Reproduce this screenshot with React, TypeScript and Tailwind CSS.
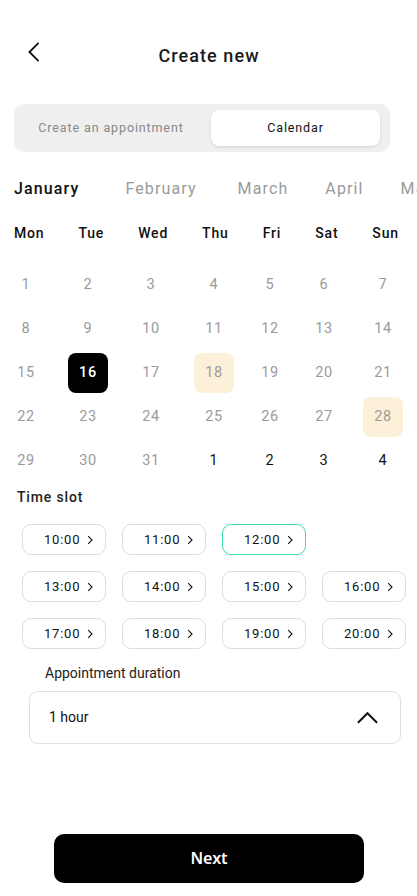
import { useState } from 'react';

const months = [
  { name: 'January', ml: 'ml-0' },
  { name: 'February', ml: 'ml-[46px]' },
  { name: 'March', ml: 'ml-[41px]' },
  { name: 'April', ml: 'ml-[37px]' },
  { name: 'May', ml: 'ml-[37px]' },
];
const weekdays = ['Mon', 'Tue', 'Wed', 'Thu', 'Fri', 'Sat', 'Sun'];

const days: { n: number; next?: boolean }[] = [
  ...Array.from({ length: 31 }, (_, i) => ({ n: i + 1 })),
  { n: 1, next: true },
  { n: 2, next: true },
  { n: 3, next: true },
  { n: 4, next: true },
];

const booked = [18, 28];

const slots = [
  ['10:00', '11:00', '12:00'],
  ['13:00', '14:00', '15:00', '16:00'],
  ['17:00', '18:00', '19:00', '20:00'],
];

function Chevron({ className }: { className?: string }) {
  return (
    <svg viewBox="0 0 10 10" className={className} fill="none" stroke="currentColor" strokeWidth="1.1">
      <path d="M3.2 1.2 7 5 3.2 8.8" />
    </svg>
  );
}

export default function App() {
  const [tab, setTab] = useState('calendar');
  const [day, setDay] = useState(16);
  const [slot, setSlot] = useState('12:00');

  return (
    <div className="w-[417px] h-[896px] bg-white relative overflow-hidden text-[#111]" style={{ fontFamily: 'Roboto, "Noto Sans", sans-serif' }}>
      {/* header */}
      <div className="relative h-[110px] pt-[41px]">
        <button className="absolute left-[24px] top-[40px] w-[20px] h-[24px] flex items-center justify-center">
          <svg viewBox="0 0 14 24" className="w-[14px] h-[22px]" fill="none" stroke="#111" strokeWidth="2">
            <path d="M12 2 2 12l10 10" />
          </svg>
        </button>
        <h1 className="text-center text-[18px] font-medium tracking-[0.06em] leading-[30px] ml-[1px] text-[#1a1a1a]">Create new</h1>
      </div>

      {/* tabs */}
      <div className="mx-[14px] w-[376px] h-[48px] bg-[#efefef] rounded-[10px] flex items-center pl-[6px] pr-[10px] -mt-[6px]">
        <button
          onClick={() => setTab('appointment')}
          className={`w-[182px] h-[36px] rounded-[8px] text-[12.5px] tracking-[0.07em] ${tab === 'appointment' ? 'bg-white text-[#111] shadow-[0_1px_3px_rgba(0,0,0,0.12)]' : 'text-[#888]'}`}
        >
          Create an appointment
        </button>
        <div className="flex-1" />
        <button
          onClick={() => setTab('calendar')}
          className={`w-[169px] h-[36px] rounded-[8px] text-[12.5px] tracking-[0.07em] ${tab === 'calendar' ? 'bg-white text-[#111] shadow-[0_1px_3px_rgba(0,0,0,0.12)]' : 'text-[#888]'}`}
        >
          Calendar
        </button>
      </div>

      {/* months */}
      <div className="flex mt-[25px] pl-[14px] whitespace-nowrap text-[16px] tracking-[0.07em] leading-[24px] overflow-hidden">
        {months.map((m, i) => (
          <span key={m.name} className={`${m.ml} ${i === 0 ? 'text-[#111] font-medium' : 'text-[#9a9a9a]'}`}>
            {m.name}
          </span>
        ))}
      </div>

      {/* weekdays */}
      <div className="flex justify-between mt-[22px] pl-[14px] pr-[18px] text-[14px] font-medium tracking-[0.06em] leading-[20px]">
        {weekdays.map((w) => (
          <span key={w}>{w}</span>
        ))}
      </div>

      {/* days */}
      <div className="grid grid-cols-[62px_63px_63px_56px_54px_59px_40px] gap-y-[4px] pl-[6px] mt-[22px]">
        {days.map((d, i) => {
          const active = !d.next && d.n === day;
          const busy = !d.next && booked.includes(d.n);
          return (
            <button
              key={i}
              onClick={() => !d.next && setDay(d.n)}
              className={`w-[40px] h-[40px] rounded-[8px] flex items-center justify-center text-[14.5px] tracking-[0.05em] ${
                active
                  ? 'bg-black text-white font-medium'
                  : busy
                  ? 'bg-[#fcf0d8] text-[#9a9a9a]'
                  : d.next
                  ? 'text-[#111]'
                  : 'text-[#9a9a9a]'
              }`}
            >
              {d.n}
            </button>
          );
        })}
      </div>

      {/* time slot */}
      <div className="pl-[17px] mt-[6px] text-[14px] font-medium tracking-[0.06em] text-[#222] leading-[20px]">Time slot</div>
      <div className="flex flex-col gap-[16px] mt-[17px] pl-[22px]">
        {slots.map((row, r) => (
          <div key={r} className="flex gap-[16px]">
            {row.map((s) => (
              <button
                key={s}
                onClick={() => setSlot(s)}
                className={`w-[84px] h-[31px] rounded-[9px] border flex items-center pl-[21px] gap-[5px] text-[13px] tracking-[0.06em] text-[#111] ${
                  slot === s ? 'border-[#3ee0a0]' : 'border-[#dcdcdc]'
                }`}
              >
                <span>{s}</span>
                <Chevron className="w-[10px] h-[10px]" />
              </button>
            ))}
          </div>
        ))}
      </div>

      {/* duration */}
      <div className="pl-[45px] mt-[14px] text-[14px] text-[#222] leading-[20px]">Appointment duration</div>
      <div className="mx-[29px] w-[372px] h-[53px] mt-[8px] rounded-[9px] border border-[#e0e0e0] flex items-center justify-between pl-[19px] pr-[21px]">
        <span className="text-[14px] text-[#111]">1 hour</span>
        <svg viewBox="0 0 24 14" className="w-[23px] h-[14px]" fill="none" stroke="#111" strokeWidth="2">
          <path d="M2 12 12 2l10 10" />
        </svg>
      </div>

      {/* next */}
      <button className="absolute left-[54px] top-[834px] w-[310px] h-[49px] rounded-[10px] bg-black text-white text-[16px] font-semibold pb-[2px]" style={{ fontFamily: '"Noto Sans", sans-serif' }}>
        Next
      </button>
    </div>
  );
}
